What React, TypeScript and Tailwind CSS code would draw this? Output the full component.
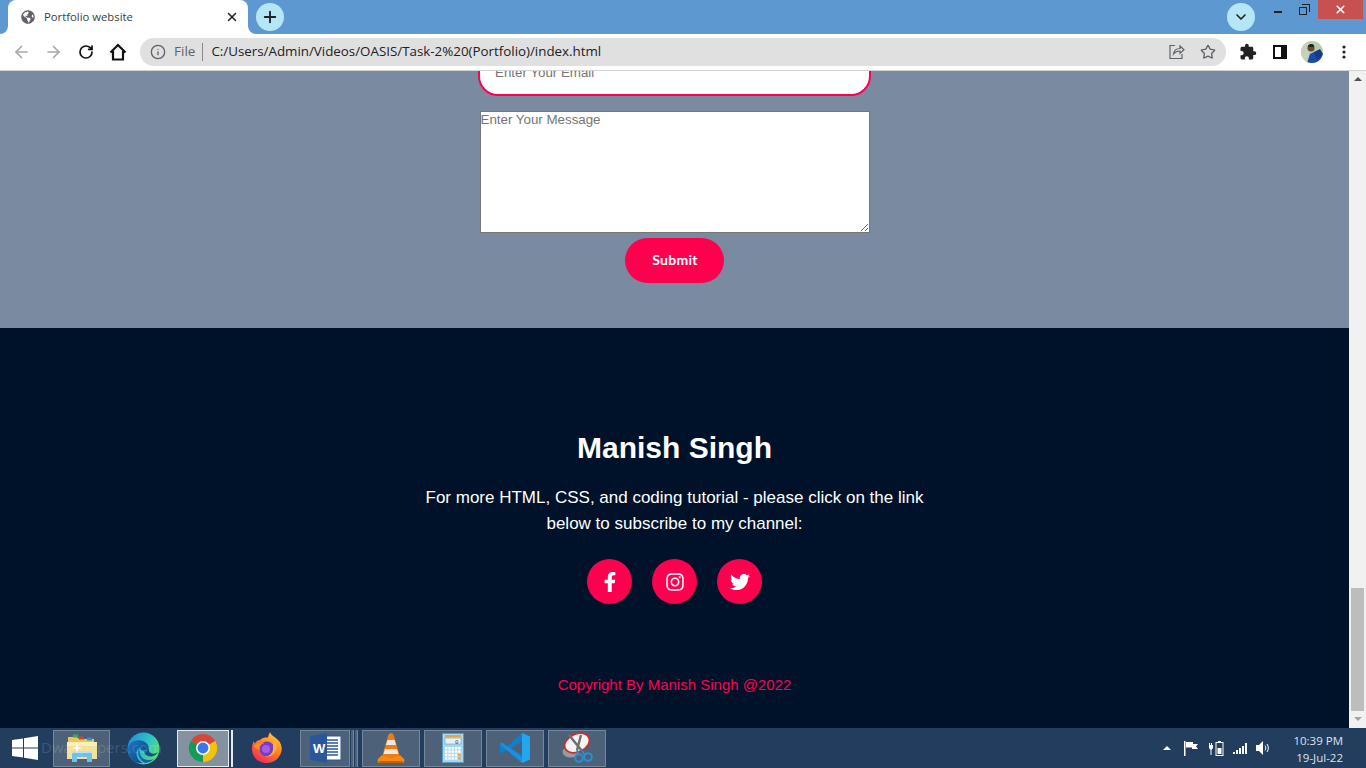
import { ArrowLeft, ArrowRight, RotateCw, Info, Star, X, Plus, ChevronDown } from "lucide-react";
import { FaFacebookF, FaInstagram, FaTwitter, FaGlobeAmericas } from "react-icons/fa";
import { MdExtension } from "react-icons/md";

function HomeIcon() {
  return (
    <svg width="18" height="18" viewBox="0 0 18 18" fill="none" stroke="#111" strokeWidth="2.200" strokeLinejoin="miter">
      <path d="M1.500 9.500 9 2l7.500 7.500M4 8v8.500h10V8" />
    </svg>
  );
}
function ShareIcon() {
  return (
    <svg width="16" height="16" viewBox="0 0 16 16" fill="none" stroke="#5f6368" strokeWidth="1.200">
      <path d="M6 1.500H1v13h12V10" />
      <path d="M4.500 10c.5-3.500 3-5.500 6.500-5.500V2l4 3.800-4 3.700V7c-2.500 0-4.800.8-6.500 3z" />
    </svg>
  );
}
function PanelIcon() {
  return (
    <svg width="14" height="14" viewBox="0 0 14 14">
      <rect width="14" height="14" fill="#111" />
      <rect x="2" y="2" width="6" height="10" fill="#fff" />
    </svg>
  );
}
function Avatar() {
  return (
    <svg width="22" height="22" viewBox="0 0 22 22">
      <clipPath id="av"><circle cx="11" cy="11" r="11" /></clipPath>
      <g clipPath="url(#av)">
        <rect width="22" height="22" fill="#b7cfa6" />
        <path d="M0 0h8v22H0z" fill="#c4d3b8" />
        <path d="M6 22l3-9 4-2 9 2v9z" fill="#1d49a8" />
        <path d="M13 11l6-3 3 5-6 6z" fill="#16398a" />
        <circle cx="10" cy="7" r="3.600" fill="#6b4a3a" />
        <path d="M7 4.500c2-2 5-2 6 0l-.5 1.500h-5z" fill="#222" />
      </g>
    </svg>
  );
}
function Dots() {
  return (
    <svg width="4" height="14" viewBox="0 0 4 14" fill="#222">
      <circle cx="2" cy="2" r="1.600" /><circle cx="2" cy="7" r="1.600" /><circle cx="2" cy="12" r="1.600" />
    </svg>
  );
}

function WinLogo() {
  return (
    <svg width="26" height="24" viewBox="0 0 26 24" fill="#fff">
      <path d="M0 4l11-1.600V11.400H0zM12 2.200 26 0v11.400H12zM0 12.400h11v9.200L0 20zM12 12.400h14V24l-14-2.200z" />
    </svg>
  );
}
function FolderIcon() {
  return (
    <svg width="32" height="30" viewBox="0 0 32 30">
      <path d="M2 4h9l2 2h15v4H2z" fill="#e8c85e" />
      <rect x="7" y="1.500" width="5" height="3" fill="#2fb04a" />
      <rect x="13" y="3.500" width="5" height="3" fill="#d8402f" />
      <rect x="21" y="4.500" width="5" height="3" fill="#2f8fd8" />
      <path d="M1 9h30v17H1z" fill="#f5e09a" />
      <path d="M1 9h30v4H1z" fill="#fbeeb9" />
      <path d="M8 18h16l2 3v8h-5v-5H11v5H6v-8z" fill="#6fc0ea" />
      <path d="M8 18h16l1 2H7z" fill="#b4e2f8" />
      <path d="M11 10l1 4 4 1-4 1-1 4-1-4-4-1 4-1z" fill="#fff" />
    </svg>
  );
}
function EdgeIcon() {
  return (
    <svg width="33" height="33" viewBox="0 0 32 32">
      <defs>
        <linearGradient id="eg1" x1="0" y1="0.200" x2="1" y2="0.700"><stop offset="0" stopColor="#1f8fe0" /><stop offset="0.550" stopColor="#2cc4c0" /><stop offset="1" stopColor="#62dd6c" /></linearGradient>
        <linearGradient id="eg2" x1="0" y1="0" x2="1" y2="1"><stop offset="0" stopColor="#1c78c8" /><stop offset="1" stopColor="#0c3f7a" /></linearGradient>
      </defs>
      <circle cx="16" cy="16" r="15.500" fill="url(#eg1)" />
      <path d="M1 17C1 10 7 7.500 12 8c5 .5 9 3.500 9 7.500 0 1.500-1 2.500-3 2.500-4 0-5 0-6-3-5 3-3 12 3 15C7 31 1 25 1 17z" fill="url(#eg2)" />
      <path d="M21 15.500c0 2-2 3-4 3-1 3 3 6 8 5 2-.5 4-2 5.500-4-1.500 1-3 1.500-5 1.500-2.500 0-4.500-2-4.500-5.500z" fill="#15508f" />
      <path d="M12 15c-3 5 0 13 6 15 3-.5 6-1.500 8-3.500-5 1.500-11 .5-13-4-1-2.500-1.500-5-1-7.500z" fill="#1f5fa8" />
    </svg>
  );
}
function ChromeIcon() {
  return (
    <svg width="30" height="30" viewBox="0 0 32 32">
      <path d="M16 16 3 8.500A15 15 0 0 1 29 8.500z" fill="#db4437" />
      <path d="M16 16 29 8.500A15 15 0 0 1 16 31z" fill="#f4c20d" />
      <path d="M16 16 16 31A15 15 0 0 1 3 8.500z" fill="#0f9d58" />
      <circle cx="16" cy="16" r="7.500" fill="#fff" />
      <circle cx="16" cy="16" r="5.800" fill="#3b78e7" />
    </svg>
  );
}
function FirefoxIcon() {
  return (
    <svg width="32" height="32" viewBox="0 0 32 32">
      <defs>
        <linearGradient id="ff1" x1="0.800" y1="0" x2="0.200" y2="1"><stop offset="0" stopColor="#ffd02e" /><stop offset="0.500" stopColor="#ff7a2a" /><stop offset="1" stopColor="#f0245e" /></linearGradient>
      </defs>
      <path d="M19 0c1 4 6 5 9 9 3 4 3.500 9 1.500 13-2.500 6-8 9-14 9C8 31 1.500 26 1 18c-.2-3 .5-7 2-9 0 1 .5 2 1 2.500C5 9 7.500 8 9 8c2.500-3 6-2.500 8-2.500.5-2 1-3.500 2-5.500z" fill="url(#ff1)" />
      <circle cx="16" cy="17" r="7.500" fill="#7a3bc8" />
      <circle cx="15" cy="17" r="4" fill="#a25fe0" />
      <path d="M3 14c3-4 8-4 10-2.500-3 0-5 3-4.500 6.500-2-.5-4.500-1.500-5.500-4z" fill="#ff8a1f" />
      <path d="M23 7c3 3 3.500 9 1 13-1.500 3-5.500 5.500-10 4.500 4 0 7.500-3 8-7 .3-3.500-.5-7 1-10.500z" fill="#ffb028" />
    </svg>
  );
}
function WordIcon() {
  return (
    <svg width="32" height="32" viewBox="0 0 32 32">
      <rect x="15" y="4" width="17" height="24" fill="#fff" stroke="#2b579a" strokeWidth="1" />
      <path d="M18 8h11M18 11h11M18 14h11M18 17h11M18 20h11M18 23h11" stroke="#2b579a" strokeWidth="1.300" />
      <path d="M1 4l17-3v30L1 28z" fill="#2b579a" />
      <text x="4" y="21" fill="#fff" fontSize="13" fontWeight="700" fontFamily="Liberation Sans, sans-serif">W</text>
    </svg>
  );
}
function VlcIcon() {
  return (
    <svg width="28" height="32" viewBox="0 0 28 32">
      <path d="M14 1c1.500 0 2.500 1 3 3l6 21H5l6-21c.5-2 1.500-3 3-3z" fill="#f07d0a" />
      <path d="M10.500 8h7l1.500 5H9zM8 17h12l1.500 5h-15z" fill="#e8e8e8" />
      <path d="M5 23 1 27c-1 1.500 0 4 1.500 4h23c1.500 0 2.500-2.500 1.500-4l-4-4c-1 3-17 3-18 0z" fill="#f58a12" />
      <path d="M2 29h24l-.5 2h-23z" fill="#c85f05" />
    </svg>
  );
}
function CalcIcon() {
  const keys = [];
  for (let r = 0; r < 4; r++) for (let c = 0; c < 5; c++) keys.push([c, r]);
  return (
    <svg width="22" height="30" viewBox="0 0 22 30">
      <rect x="0.500" y="0.500" width="21" height="29" fill="#a8d8ee" stroke="#5a9cc0" />
      <rect x="3" y="2" width="16" height="2" fill="#f0a040" />
      <rect x="3" y="5" width="16" height="6" fill="#e6f0f6" stroke="#6a8aa0" strokeWidth="0.500" />
      <text x="13" y="10.500" fontSize="6" fill="#444" fontFamily="Liberation Mono, monospace">0</text>
      {keys.map(([c, r]) => (
        <rect key={c + "-" + r} x={3 + c * 3.3} y={14 + r * 3.4} width="2.400" height="2.500" fill={c === 4 && r > 1 ? "#f0a040" : "#fff"} />
      ))}
    </svg>
  );
}
function VscodeIcon() {
  return (
    <svg width="32" height="32" viewBox="0 0 32 32">
      <path d="M23 1 8 15 3 10.500 1 12v8l2 1.500L8 17l15 14V23L12 16 23 9z" fill="#0f80d0" />
      <path d="M3 10.500 1 12l22 19v-6z" fill="#1b8fe0" />
      <path d="M23 1 31 4.500v23L23 31z" fill="#23a6f2" />
    </svg>
  );
}
function SnipIcon() {
  return (
    <svg width="32" height="32" viewBox="0 0 32 32">
      <ellipse cx="10" cy="20" rx="8.500" ry="5.500" fill="#9a9a9a" />
      <ellipse cx="16" cy="11" rx="13" ry="9" transform="rotate(-25 16 11)" fill="#f4f4f4" stroke="#c83030" strokeWidth="1.800" />
      <path d="M8 3l13 16M20 3 16 18" stroke="#6f6f6f" strokeWidth="2.400" />
      <path d="M21 19l3 4M16 18l1 4" stroke="#2a8fd0" strokeWidth="2" />
      <circle cx="18" cy="26" r="3.800" fill="none" stroke="#2a8fd0" strokeWidth="2" />
      <circle cx="27" cy="25" r="3.800" fill="none" stroke="#2a8fd0" strokeWidth="2" />
    </svg>
  );
}

function FlagIcon() {
  return (
    <svg width="16" height="15" viewBox="0 0 16 15" fill="#fff">
      <rect x="0" y="0" width="1.500" height="15" />
      <path d="M2 1h7v2h5l-2 2.500L14 8H8V6.500H2z" />
    </svg>
  );
}
function BatteryIcon() {
  return (
    <svg width="16" height="15" viewBox="0 0 16 15" fill="#fff">
      <path d="M1 2h1v2h1V2h1v2h1v3L3.500 9v5h-1V9L1 7z" />
      <path d="M10 0h3v1h2.500v14h-8V1H10zM8.500 2v12h6V2z" />
      <rect x="9.500" y="7" width="4" height="6" />
    </svg>
  );
}
function BarsIcon() {
  return (
    <svg width="15" height="11" viewBox="0 0 15 11" fill="#fff">
      <rect x="0" y="9" width="2" height="2" /><rect x="3" y="7" width="2" height="4" /><rect x="6" y="5" width="2" height="6" /><rect x="9" y="3" width="2" height="8" /><rect x="12" y="0" width="2" height="11" />
    </svg>
  );
}
function SpeakerIcon() {
  return (
    <svg width="15" height="14" viewBox="0 0 15 14" fill="none">
      <path d="M0 4h3l4-4v14l-4-4H0z" fill="#fff" />
      <path d="M9 4.500c1 1.500 1 3.500 0 5M11 3c1.800 2.500 1.800 5.500 0 8" stroke="#fff" strokeWidth="1" />
    </svg>
  );
}

function TaskBox({ w, active, children }: { w: string; active?: boolean; children: React.ReactNode }) {
  return (
    <div className={`${w} h-[37px] flex items-center justify-center border ${active ? "bg-[#84929f] border-[#e6ebef]" : "bg-[#4d6278] border-[#74879a]"}`}>
      {children}
    </div>
  );
}

export default function App() {
  return (
    <div className="h-screen w-[1366px] flex flex-col overflow-hidden font-['Liberation_Sans',sans-serif]">
      {/* Tab strip */}
      <div className="h-[34px] shrink-0 bg-[#5e98d0] flex items-start">
        <div className="relative ml-[8px] w-[240px] h-[34px] bg-white rounded-t-[8px] flex items-center pl-[13px] pr-[9px]">
          <div className="absolute -left-[8px] bottom-0 w-[8px] h-[8px] bg-white">
            <div className="w-full h-full rounded-br-[8px] bg-[#5e98d0]" />
          </div>
          <div className="absolute -right-[8px] bottom-0 w-[8px] h-[8px] bg-white">
            <div className="w-full h-full rounded-bl-[8px] bg-[#5e98d0]" />
          </div>
          <FaGlobeAmericas size={14} color="#5f6368" />
          <span className="ml-[9px] flex-1 text-[11.300px] text-[#3c4043] font-['Open_Sans',sans-serif] whitespace-nowrap">Portfolio website</span>
          <X size={14} color="#222" strokeWidth={2.5} />
        </div>
        <div className="ml-[8px] mt-[3px] w-[28px] h-[28px] rounded-full bg-[#b5e6f5] flex items-center justify-center">
          <Plus size={18} color="#222" strokeWidth={2.5} />
        </div>
        <div className="flex-1" />
        <div className="mt-[3px] w-[28px] h-[28px] rounded-full bg-[#b5e6f5] flex items-center justify-center">
          <ChevronDown size={16} color="#222" strokeWidth={2.5} />
        </div>
        <div className="ml-[19px] mt-[11px] w-[8px] h-[2px] bg-[#222]" />
        <div className="ml-[17px] mt-[4px] w-[11px] h-[11px] relative">
          <div className="absolute left-0 bottom-0 w-[8px] h-[8px] border border-[#222] bg-[#5e98d0]" />
          <div className="absolute right-0 top-0 w-[8px] h-[8px] border-t border-r border-[#222]" />
        </div>
        <div className="ml-[8px] mr-[3px] w-[45px] h-[19px] bg-[#c75050] flex items-center justify-center">
          <X size={13} color="#fff" strokeWidth={3} />
        </div>
      </div>

      {/* Toolbar */}
      <div className="h-[37px] shrink-0 bg-white border-b border-[#d2d2d2] flex items-center">
        <div className="ml-[12px] w-[19px] flex justify-center"><ArrowLeft size={20} color="#a6a6a6" strokeWidth={2} /></div>
        <div className="ml-[13px] w-[19px] flex justify-center"><ArrowRight size={20} color="#a6a6a6" strokeWidth={2} /></div>
        <div className="ml-[13px] w-[19px] flex justify-center"><RotateCw size={16} color="#111" strokeWidth={2.6} /></div>
        <div className="ml-[13px] w-[19px] flex justify-center"><HomeIcon /></div>
        <div className="ml-[13px] w-[1086px] h-[28px] rounded-full bg-[#e0e0e0] flex items-center pl-[10px] pr-[9px] mb-[1px]">
          <Info size={16} color="#5f6368" strokeWidth={2} />
          <span className="ml-[8px] pt-[1px] text-[13.500px] text-[#5f6368] font-['Open_Sans',sans-serif] leading-none">File</span>
          <div className="ml-[7px] w-px h-[18px] bg-[#8a8a8a]" />
          <span className="ml-[8px] pt-[1px] flex-1 text-[13.350px] text-[#202124] font-['Open_Sans',sans-serif] leading-none whitespace-nowrap">C:/Users/Admin/Videos/OASIS/Task-2%20(Portfolio)/index.html</span>
          <ShareIcon />
          <div className="ml-[15px]"><Star size={16} color="#5f6368" strokeWidth={2} /></div>
          <div className="w-[1px]" />
        </div>
        <div className="ml-[13px] w-[18px] flex justify-center"><MdExtension size={18} color="#222" /></div>
        <div className="ml-[16px] w-[14px] flex justify-center"><PanelIcon /></div>
        <div className="ml-[14px] w-[22px] flex justify-center"><Avatar /></div>
        <div className="ml-[19px] w-[4px] flex justify-center"><Dots /></div>
      </div>

      {/* Page area */}
      <div className="flex-1 flex min-h-0">
        <div className="flex-1 min-w-0 flex flex-col">
          <section className="h-[257px] shrink-0 overflow-hidden bg-[#7a8aa0] flex flex-col items-center">
            <input
              className="-mt-[23px] shrink-0 w-[393px] h-[48px] bg-white border-2 border-[#ff004f] rounded-[20px] pl-[15px] text-[13.333px] outline-none placeholder:text-[#757575]"
              placeholder="Enter Your Email"
            />
            <textarea
              className="mt-[15px] shrink-0 w-[390px] h-[122px] bg-white border border-[#767676] text-[13.333px] block outline-none placeholder:text-[#757575] leading-[15px]"
              placeholder="Enter Your Message"
            />
            <button className="mt-[5px] shrink-0 w-[99px] h-[45px] pb-[2px] pl-[1px] rounded-full bg-[#ff004f] text-white text-[14px] tracking-[0.3px] font-bold font-['Lato',sans-serif]">
              Submit
            </button>
          </section>
          <footer className="flex-1 bg-[#00112a] flex flex-col items-center pt-[102px] text-white">
            <h1 className="text-[30px] leading-[36px] font-bold">Manish Singh</h1>
            <p className="mt-[19px] w-[520px] text-center text-[17px] leading-[26px]">
              For more HTML, CSS, and coding tutorial - please click on the link below to subscribe to my channel:
            </p>
            <div className="mt-[22px] flex gap-[20px]">
              <div className="w-[45px] h-[45px] rounded-full bg-[#ff004f] flex items-center justify-center"><FaFacebookF size={20} color="#fff" /></div>
              <div className="w-[45px] h-[45px] rounded-full bg-[#ff004f] flex items-center justify-center"><FaInstagram size={20} color="#fff" /></div>
              <div className="w-[45px] h-[45px] rounded-full bg-[#ff004f] flex items-center justify-center"><FaTwitter size={20} color="#fff" /></div>
            </div>
            <p className="mt-[71px] text-[15px] leading-[20px] text-[#ff004f]">Copyright By Manish Singh @2022</p>
          </footer>
        </div>
        {/* Scrollbar */}
        <div className="w-[17px] shrink-0 bg-[#f1f1f1] flex flex-col items-center">
          <div className="mt-[6px] w-0 h-0 border-l-[4px] border-r-[4px] border-b-[4px] border-l-transparent border-r-transparent border-b-[#505050]" />
          <div className="flex-1" />
          <div className="w-[13px] h-[123px] bg-[#bdbdbd]" />
          <div className="mt-[6px] mb-[7px] w-0 h-0 border-l-[4px] border-r-[4px] border-t-[4px] border-l-transparent border-r-transparent border-t-[#a3a3a3]" />
        </div>
      </div>

      {/* Taskbar */}
      <div className="h-[40px] shrink-0 bg-[#233d5e] flex items-center relative">
        <div className="w-[53px] h-full flex items-center pl-[12px]"><WinLogo /></div>
        <TaskBox w="w-[57px]"><FolderIcon /></TaskBox>
        <div className="w-[67px] flex justify-center"><EdgeIcon /></div>
        <TaskBox w="w-[52px]" active><ChromeIcon /></TaskBox>
        <div className="ml-[2px] w-[2px] h-[37px] bg-[#e6ebef]" />
        <div className="w-[67px] flex justify-center"><FirefoxIcon /></div>
        <TaskBox w="w-[50px]"><WordIcon /></TaskBox>
        <div className="ml-[1px] w-[3px] h-[37px] bg-[#4d6278] border-r border-[#74879a]" />
        <div className="ml-[1px] w-[3px] h-[37px] bg-[#4d6278] border-r border-[#74879a]" />
        <div className="ml-[4px]"><TaskBox w="w-[58px]"><VlcIcon /></TaskBox></div>
        <div className="ml-[4px]"><TaskBox w="w-[58px]"><CalcIcon /></TaskBox></div>
        <div className="ml-[4px]"><TaskBox w="w-[58px]"><VscodeIcon /></TaskBox></div>
        <div className="ml-[4px]"><TaskBox w="w-[58px]"><SnipIcon /></TaskBox></div>
        <div className="flex-1" />
        <div className="w-0 h-0 border-l-[4px] border-r-[4px] border-b-[4px] border-l-transparent border-r-transparent border-b-white" />
        <div className="ml-[13px]"><FlagIcon /></div>
        <div className="ml-[8px]"><BatteryIcon /></div>
        <div className="ml-[9px]"><BarsIcon /></div>
        <div className="ml-[8px]"><SpeakerIcon /></div>
        <div className="ml-[22px] mr-[23px] mt-[2px] w-[50px] flex flex-col items-end text-[11.500px] leading-[17px] text-[#dbe3ea] font-['Open_Sans',sans-serif] whitespace-nowrap">
          <span>10:39 PM</span>
          <span>19-Jul-22</span>
        </div>
        <span className="absolute left-[41px] top-[12px] text-[15px] leading-none text-white/15 font-['Open_Sans',sans-serif] pointer-events-none whitespace-nowrap">Dwallpapers.com</span>
      </div>
    </div>
  );
}
